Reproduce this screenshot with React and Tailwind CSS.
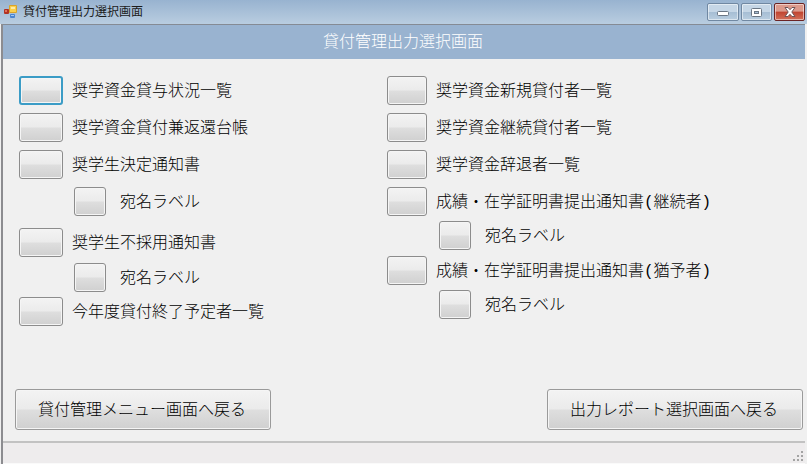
const LEFT_ITEMS = [
  { label: '奨学資金貸与状況一覧', gap: '', active: true },
  { label: '奨学資金貸付兼返還台帳', gap: 'mt-2' },
  { label: '奨学生決定通知書', gap: 'mt-2' },
  { label: '宛名ラベル', gap: 'mt-2', sub: true },
  { label: '奨学生不採用通知書', gap: 'mt-3' },
  { label: '宛名ラベル', gap: 'mt-[6px]', sub: true },
  { label: '今年度貸付終了予定者一覧', gap: 'mt-[5px]' },
]

const RIGHT_ITEMS = [
  { label: '奨学資金新規貸付者一覧', gap: '' },
  { label: '奨学資金継続貸付者一覧', gap: 'mt-2' },
  { label: '奨学資金辞退者一覧', gap: 'mt-2' },
  { label: '成績・在学証明書提出通知書(継続者)', gap: 'mt-2' },
  { label: '宛名ラベル', gap: 'mt-[5px]', sub: true },
  { label: '成績・在学証明書提出通知書(猶予者)', gap: 'mt-[6px]' },
  { label: '宛名ラベル', gap: 'mt-[5px]', sub: true },
]

const BUTTON_FACE =
  'rounded-[3px] border bg-[linear-gradient(to_bottom,#f3f3f3_0%,#ebebeb_48%,#dedede_52%,#d0d0d0_100%)] shadow-[inset_0_0_0_1px_#f5f5f5]'

const CAPTION_FACE =
  'flex items-center justify-center h-[18px] rounded-[2px] border shadow-[inset_0_0_0_1px_rgba(255,255,255,0.5)]'

function AppIcon() {
  return (
    <svg width="14" height="14" viewBox="0 0 14 14" aria-hidden="true">
      <rect x="5" y="0" width="8" height="8" rx="1" fill="#d9a32a" />
      <rect x="6" y="1" width="6" height="6" fill="#f9cf4c" />
      <rect x="7" y="2" width="4" height="2" fill="#fdeaa6" />
      <rect x="0" y="4" width="5" height="5" rx="1" fill="#b23323" />
      <rect x="1" y="5" width="2" height="2" fill="#e0705c" />
      <rect x="6" y="9" width="5" height="4" rx="1" fill="#4a84d0" />
      <rect x="7" y="10" width="3" height="1" fill="#a5c8f2" />
    </svg>
  )
}

function MenuItem({ item, id, wide }) {
  const size = item.sub ? 'w-8' : wide ? 'w-11' : 'w-10'
  const border = item.active ? 'border-2 border-[#3b9cc6]' : 'border-[#8c8c8c]'
  return (
    <div
      className={`flex items-center ${item.gap} ${
        item.sub ? (wide ? 'ml-[55px] gap-[14px]' : 'ml-[52px] gap-[14px]') : 'gap-[9px]'
      }`}
    >
      <button
        id={id}
        type="button"
        aria-labelledby={`${id}-label`}
        className={`h-[29px] shrink-0 ${BUTTON_FACE} ${size} ${border}`}
      />
      <label id={`${id}-label`} htmlFor={id} className="pt-[2px] whitespace-nowrap">
        {item.label}
      </label>
    </div>
  )
}

function BackButton({ children }) {
  return (
    <button type="button" className={`h-[41px] w-64 pt-[2px] pr-[2px] ${BUTTON_FACE} border-[#9a9a9a]`}>
      {children}
    </button>
  )
}

export default function App() {
  return (
    <div className="flex flex-col min-h-screen bg-[#f0f0f0] text-[16px] leading-5 text-black font-['Liberation_Mono','Noto_Sans_CJK_JP',monospace] font-light">
      {/* Title bar */}
      <header className="flex items-start justify-between h-6 pl-1 bg-[linear-gradient(to_bottom,#98b3d0,#b9cde0)]">
        <div className="flex items-center gap-[5px] h-6 font-normal text-[12px] text-[#1c1c1c]">
          <AppIcon />
          <span className="pt-[2px]">貸付管理出力選択画面</span>
        </div>
        <div className="flex gap-[2px] pt-[3px] pr-[2px]">
          <button
            type="button"
            aria-label="最小化"
            className={`${CAPTION_FACE} w-8 border-[#7088a2] bg-[linear-gradient(to_bottom,#c5d6e6_50%,#a5bdd4_50%,#b9cee0)]`}
          >
            <svg width="12" height="8" viewBox="0 0 12 8" aria-hidden="true">
              <rect x="0.5" y="3.5" width="11" height="4" rx="1" fill="#fff" stroke="#6a7684" />
            </svg>
          </button>
          <button
            type="button"
            aria-label="最大化"
            className={`${CAPTION_FACE} w-[31px] border-[#7088a2] bg-[linear-gradient(to_bottom,#c5d6e6_50%,#a5bdd4_50%,#b9cee0)]`}
          >
            <svg width="11" height="9" viewBox="0 0 11 9" aria-hidden="true">
              <rect x="0.5" y="0.5" width="10" height="8" rx="1" fill="#fff" stroke="#6a7684" />
              <rect x="3.5" y="3.5" width="4" height="2" fill="#a5bdd4" stroke="#6a7684" />
            </svg>
          </button>
          <button
            type="button"
            aria-label="閉じる"
            className={`${CAPTION_FACE} w-[31px] border-[#6b2424] bg-[linear-gradient(to_bottom,#dc9a8c_45%,#c04430_50%,#d2705a)]`}
          >
            <svg width="12" height="10" viewBox="0 0 12 10" aria-hidden="true">
              <path d="M1 .5h3l2 2.200L8 .5h3L7.800 5 11 9.500H8L6 7.300 4 9.500H1L4.200 5z" fill="#fff" stroke="#6f5557" />
            </svg>
          </button>
        </div>
      </header>

      {/* Window frame */}
      <div className="flex flex-col grow ml-px mr-[2px] border-l-2 border-[#8c8c90]">
        <h1 className="flex items-center justify-center h-[35px] pt-[2px] pr-[2px] border-t border-[#858b94] bg-[#99b3d0] text-white">
          貸付管理出力選択画面
        </h1>

        <main className="flex flex-col grow">
          <div className="grid grid-cols-[368fr_418fr] pt-[17px] pl-4">
            <div>
              {LEFT_ITEMS.map((item, i) => (
                <MenuItem key={i} id={`left-${i}`} item={item} wide />
              ))}
            </div>
            <div>
              {RIGHT_ITEMS.map((item, i) => (
                <MenuItem key={i} id={`right-${i}`} item={item} />
              ))}
            </div>
          </div>

          <div className="flex justify-between mt-auto pt-6 pb-[11px] pl-3 pr-[2px]">
            <BackButton>貸付管理メニュー画面へ戻る</BackButton>
            <BackButton>出力レポート選択画面へ戻る</BackButton>
          </div>
        </main>

        {/* Status bar */}
        <footer className="flex items-end justify-end h-[23px] border-t-2 border-t-[#c2c2c2] border-b border-b-[#fafafa] bg-[#eeeced] p-px">
          <svg width="11" height="11" viewBox="0 0 11 11" fill="#a3a3a3" aria-hidden="true">
            <rect x="8" y="0" width="2" height="2" />
            <rect x="4" y="4" width="2" height="2" />
            <rect x="8" y="4" width="2" height="2" />
            <rect x="0" y="8" width="2" height="2" />
            <rect x="4" y="8" width="2" height="2" />
            <rect x="8" y="8" width="2" height="2" />
          </svg>
        </footer>
      </div>
    </div>
  )
}
